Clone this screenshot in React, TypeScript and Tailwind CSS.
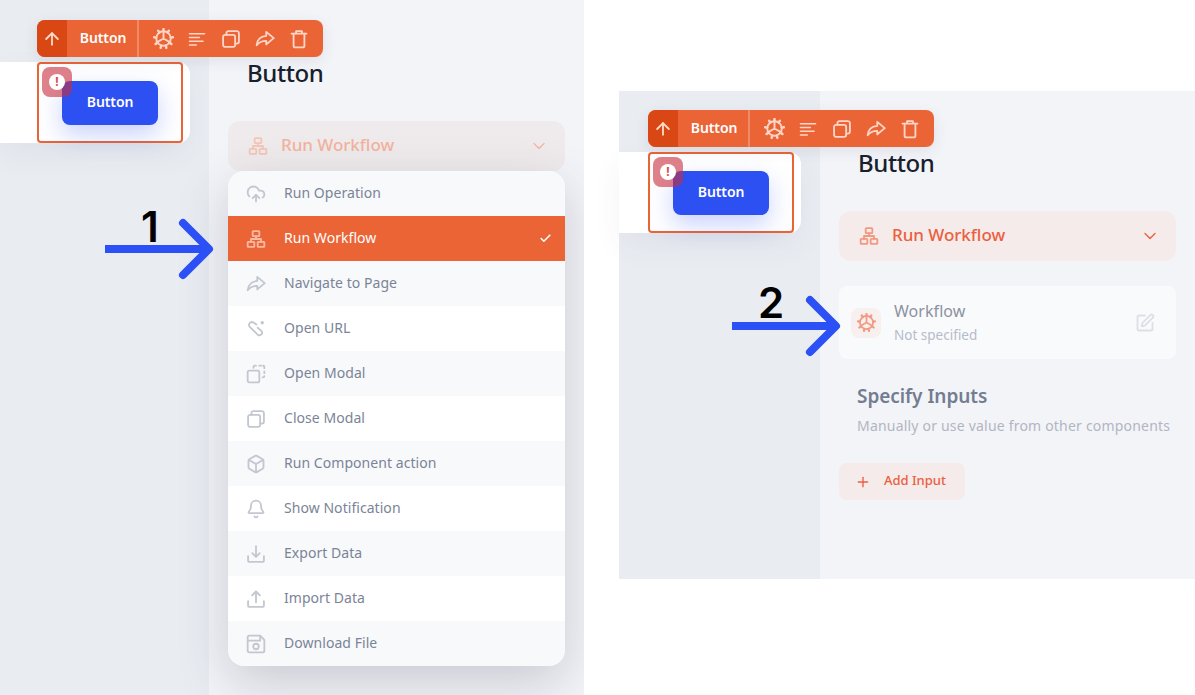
import React from "react";
import { CloudUpload, Box, Bell, ArrowUp, ChevronDown, Check, Plus, SquarePen } from "lucide-react";

type IP = { className?: string };
const S = ({ className, children, w = 2.2 }: IP & { children: React.ReactNode; w?: number }) => (
  <svg viewBox="0 0 24 24" fill="none" stroke="currentColor" strokeWidth={w} strokeLinecap="round" strokeLinejoin="round" className={className}>{children}</svg>
);
const Gear = ({ className }: IP) => (
  <S className={className} w={2.2}>
    <circle cx="12" cy="12" r="8.300" />
    <path d="M12 3.700V12M4.800 16.100 12 12M19.200 16.100 12 12" />
    <path d="M12 1.200v2.500M5.900 3.100l1.400 2M18.100 3.100l-1.400 2M1.200 10.500l2.500.5M22.800 10.500l-2.500.5M3 18.300l2.100-1.700M21 18.300l-2.100-1.700M8.800 22.600l.6-2.500M15.200 22.600l-.6-2.500" strokeWidth={2.800} />
  </S>
);
const Sitemap = ({ className }: IP) => (
  <S className={className}>
    <rect x="8" y="2.500" width="8" height="6" rx="0.800" />
    <rect x="2" y="15.500" width="8" height="6" rx="0.800" />
    <rect x="14" y="15.500" width="8" height="6" rx="0.800" />
    <path d="M12 8.500V12M6 15.500V12h12v3.500" />
  </S>
);
const Lines = ({ className }: IP) => (
  <S className={className} w={2.200}>
    <path d="M2 5h20M2 10h13M2 15h18M2 20h9" />
  </S>
);
const Share = ({ className }: IP) => (
  <S className={className}>
    <path d="M13.500 3.500 22.500 11l-9 7.500v-4.300c-4.500 0-8.500 1.300-11.500 5.300.5-6.500 5-10.500 11.500-11.200z" />
  </S>
);
const CopyI = ({ className }: IP) => (
  <S className={className}>
    <rect x="2.500" y="7" width="14.500" height="14.500" rx="2.500" />
    <path d="M6.500 7V5a2.500 2.500 0 0 1 2.500-2.500h10A2.500 2.500 0 0 1 21.500 5v10a2.500 2.500 0 0 1-2.500 2.500h-2" />
  </S>
);
const Trash = ({ className }: IP) => (
  <S className={className}>
    <path d="M3 5.500h18M8.500 5.500V2.500h7v3" />
    <path d="M5.500 5.500v14.500a2 2 0 0 0 2 2h9a2 2 0 0 0 2-2V5.500" />
  </S>
);
const LinkDot = ({ className }: IP) => (
  <S className={className}>
    <path d="M12.500 6.500 8.500 4a3.500 3.500 0 0 0-4 5.500L14 18.800a3.300 3.300 0 0 0 5-4l-5-4.300" />
    <circle cx="19.500" cy="4.500" r="2" fill="currentColor" stroke="none" />
  </S>
);
const OpenModal = ({ className }: IP) => (
  <S className={className}>
    <rect x="2" y="8" width="14" height="14" rx="2" />
    <path d="M9 4.500V3.500A1.500 1.500 0 0 1 10.500 2H12M16 2h2M20.500 2A1.500 1.500 0 0 1 22 3.500V5M22 9v2M22 14.500A1.500 1.500 0 0 1 20.500 16H20" />
  </S>
);
const Tray = ({ up, className }: IP & { up?: boolean }) => (
  <S className={className}>
    <path d="M2.500 14.500V20a1.500 1.500 0 0 0 1.500 1.500h16a1.500 1.500 0 0 0 1.500-1.500v-5.500" />
    {up ? <path d="M12 16V3M7.500 7.500 12 3l4.500 4.500" /> : <path d="M12 2.500V15M7.500 11l4.500 4.500 4.500-4.500" />}
  </S>
);
const Save = ({ className }: IP) => (
  <S className={className}>
    <path d="M4 2h13l5 5v13a2 2 0 0 1-2 2H4a2 2 0 0 1-2-2V4a2 2 0 0 1 2-2z" />
    <path d="M2.500 8H17V2.500" />
    <circle cx="12" cy="15" r="3.300" />
  </S>
);

const items: [string, (p: IP) => React.ReactNode][] = [
  ["Run Operation", (p) => <CloudUpload className={p.className} strokeWidth={2.2} />],
  ["Run Workflow", (p) => <Sitemap className={p.className} />],
  ["Navigate to Page", (p) => <Share className={p.className} />],
  ["Open URL", (p) => <LinkDot className={p.className} />],
  ["Open Modal", (p) => <OpenModal className={p.className} />],
  ["Close Modal", (p) => <CopyI className={p.className} />],
  ["Run Component action", (p) => <Box className={p.className} strokeWidth={2.2} />],
  ["Show Notification", (p) => <Bell className={p.className} strokeWidth={2.2} />],
  ["Export Data", (p) => <Tray className={p.className} />],
  ["Import Data", (p) => <Tray up className={p.className} />],
  ["Download File", (p) => <Save className={p.className} />],
];

function Canvas({ width, stripWidth, top }: { width: string; stripWidth: string; top: string }) {
  return (
    <div className={`${width} ${top} shrink-0 bg-[#E9ECF1]`}>
      <div className={`${stripWidth} h-[81px] bg-white rounded-r-xl flex justify-end pr-[7px] shadow-[0_12px_30px_rgba(60,70,100,0.06)]`}>
        <div className="relative w-[146px] h-[81px] border-2 border-[#EA6436] rounded flex items-center justify-center">
          <div className="w-[96px] h-[44px] bg-[#2D50F3] rounded-lg flex items-center justify-center pb-[3px] text-white text-[14px] font-semibold tracking-[-0.1px] shadow-[0_10px_24px_rgba(45,80,243,0.25)]">Button</div>
          <div className="absolute left-[3px] top-[3px] w-[30px] h-[30px] rounded-lg bg-[rgba(200,45,60,0.6)] flex items-center justify-center">
            <div className="w-[16px] h-[16px] rounded-full bg-white flex items-center justify-center text-[#E0484E] text-[12px] font-bold leading-none">!</div>
          </div>
          <div className="absolute left-[-2px] top-[-44px] z-10 w-[286px] h-[37px] rounded-lg bg-[#EA6436] flex items-center text-white shadow-[0_4px_14px_rgba(60,70,100,0.1)]">
            <div className="w-[30px] h-full bg-[#D84714] rounded-l-lg flex items-center justify-center">
              <ArrowUp className="w-[20px] h-[20px] text-[#FFD9C8]" strokeWidth={2.2} />
            </div>
            <div className="w-[72px] h-full border-r-2 border-[#F08A66] flex items-center justify-center pb-[2px] pl-[2px] text-[14px] font-semibold tracking-[-0.1px]">Button</div>
            <div className="flex-1 flex items-center pl-[14px] gap-[14px] text-[#FFD5C6]">
              <Gear className="w-[21px] h-[21px] -mr-[1px]" />
              <Lines className="w-[20px] h-[20px] scale-90" />
              <CopyI className="w-[20px] h-[20px]" />
              <Share className="w-[20px] h-[20px]" />
              <Trash className="w-[20px] h-[20px]" />
            </div>
          </div>
        </div>
      </div>
    </div>
  );
}

function SelectBox({ dim }: { dim?: boolean }) {
  return (
    <div className={`h-[50px] rounded-xl flex items-center pl-[20px] pr-[16px] ${dim ? "bg-[#EFEBEC]" : "bg-[#F4EBEA]"}`}>
      <Sitemap className={`w-[20px] h-[20px] ${dim ? "text-[#F4C6B8]" : "text-[#F19A80]"}`} />
      <span className={`ml-[13px] pb-[3px] text-[17px] font-medium tracking-[-0.05px] ${dim ? "text-[#F2B3A0]" : "text-[#EB5F3E]"}`}>Run Workflow</span>
      <ChevronDown className={`ml-auto w-[20px] h-[20px] ${dim ? "text-[#F5B5A3]" : "text-[#EB5F3E]"}`} strokeWidth={1.600} />
    </div>
  );
}

function Arrow({ className, num, numClass }: { className: string; num: string; numClass: string }) {
  return (
    <div className={`absolute z-20 w-[112px] h-[62px] ${className}`}>
      <svg viewBox="0 0 112 62" className="w-full h-full" fill="none" stroke="#2B50F5" strokeWidth={8}>
        <path d="M0 31H104" />
        <path d="M78 5l26 26-26 26" strokeLinecap="round" strokeLinejoin="round" />
      </svg>
      <span className={`absolute text-black text-[42px] leading-none font-semibold ${numClass}`} style={{ fontFamily: "Inter, sans-serif" }}>{num}</span>
    </div>
  );
}

export default function App() {
  return (
    <div className="relative flex w-[1195px] h-[695px] overflow-hidden bg-white" style={{ fontFamily: '"Noto Sans", sans-serif' }}>
      <div className="relative w-[584px] h-[695px] shrink-0 flex overflow-hidden">
        <Canvas width="w-[209px]" stripWidth="w-[190px]" top="pt-[62px]" />
        <div className="flex-1 bg-[#F3F4F8] px-[19px] pt-[55px]">
          <h2 className="pl-[19px] h-[36px] leading-[35px] text-[24px] font-medium tracking-[-0.4px] text-[#18202E]">Button</h2>
          <div className="mt-[30px]"><SelectBox dim /></div>
          <div className="rounded-2xl overflow-hidden shadow-[0_16px_50px_rgba(50,55,75,0.22)] relative">
            {items.map(([label, Icon], i) => {
              const active = i === 1;
              return (
                <div key={label} className={`h-[45px] flex items-center pl-[18px] pr-[13px] ${active ? "bg-[#EA6436] text-white" : i % 2 === 0 ? "bg-[#F8F9FB] text-[#7B8497]" : "bg-white text-[#7B8497]"}`}>
                  <span className={`w-[20px] h-[20px] flex items-center justify-center ${active ? "text-[#F8B9A4]" : "text-[#C3C7D0]"}`}>
                    {Icon({ className: "w-[20px] h-[20px]" })}
                  </span>
                  <span className="ml-[18px] pb-[2px] text-[14px] tracking-[0.05px]">{label}</span>
                  {active && <Check className="ml-auto w-[13px] h-[13px] text-white" strokeWidth={3} />}
                </div>
              );
            })}
          </div>
        </div>
      </div>

      <div className="relative ml-[35px] mt-[91px] w-[576px] h-[488px] flex">
        <Canvas width="w-[201px]" stripWidth="w-[182px]" top="pt-[61px]" />
        <div className="flex-1 bg-[#F3F4F8] px-[19px] pt-[54px]">
          <h2 className="pl-[19px] h-[36px] leading-[35px] text-[24px] font-medium tracking-[-0.4px] text-[#18202E]">Button</h2>
          <div className="mt-[30px]"><SelectBox /></div>
          <div className="mt-[25px] h-[73px] rounded-lg bg-[#F9FAFC] flex items-center pl-[12px] pr-[21px]">
            <div className="w-[30px] h-[30px] rounded-lg bg-[#F8F0EE] flex items-center justify-center">
              <Gear className="w-[19px] h-[19px] text-[#F19A84]" />
            </div>
            <div className="ml-[13px]">
              <div className="text-[16px] leading-[20px] text-[#8C92A0] tracking-[0.05px]">Workflow</div>
              <div className="mt-[5px] text-[13.500px] leading-[18px] text-[#B6BCC9]">Not specified</div>
            </div>
            <SquarePen className="ml-auto w-[20px] h-[20px] text-[#DCE0E6]" strokeWidth={2.200} />
          </div>
          <div className="pl-[18px] mt-[25px]">
            <div className="text-[19px] leading-[25px] font-semibold text-[#737D91] tracking-[-0.05px]">Specify Inputs</div>
            <div className="mt-[7px] text-[14px] leading-[20px] text-[#B1B6C3] whitespace-nowrap tracking-[0.2px]">Manually or use value from other components</div>
          </div>
          <div className="mt-[27px] w-[126px] h-[37px] rounded-lg bg-[#F4EBEA] flex items-center pl-[16px] text-[#EB5F3E]">
            <Plus className="w-[16px] h-[16px]" strokeWidth={2} />
            <span className="ml-[13px] pb-[2px] text-[13px] font-medium">Add Input</span>
          </div>
        </div>
      </div>

      <Arrow className="left-[105px] top-[218px]" num="1" numClass="left-[36px] top-[-12px]" />
      <Arrow className="left-[732px] top-[295px]" num="2" numClass="left-[26px] top-[-13px]" />
    </div>
  );
}
